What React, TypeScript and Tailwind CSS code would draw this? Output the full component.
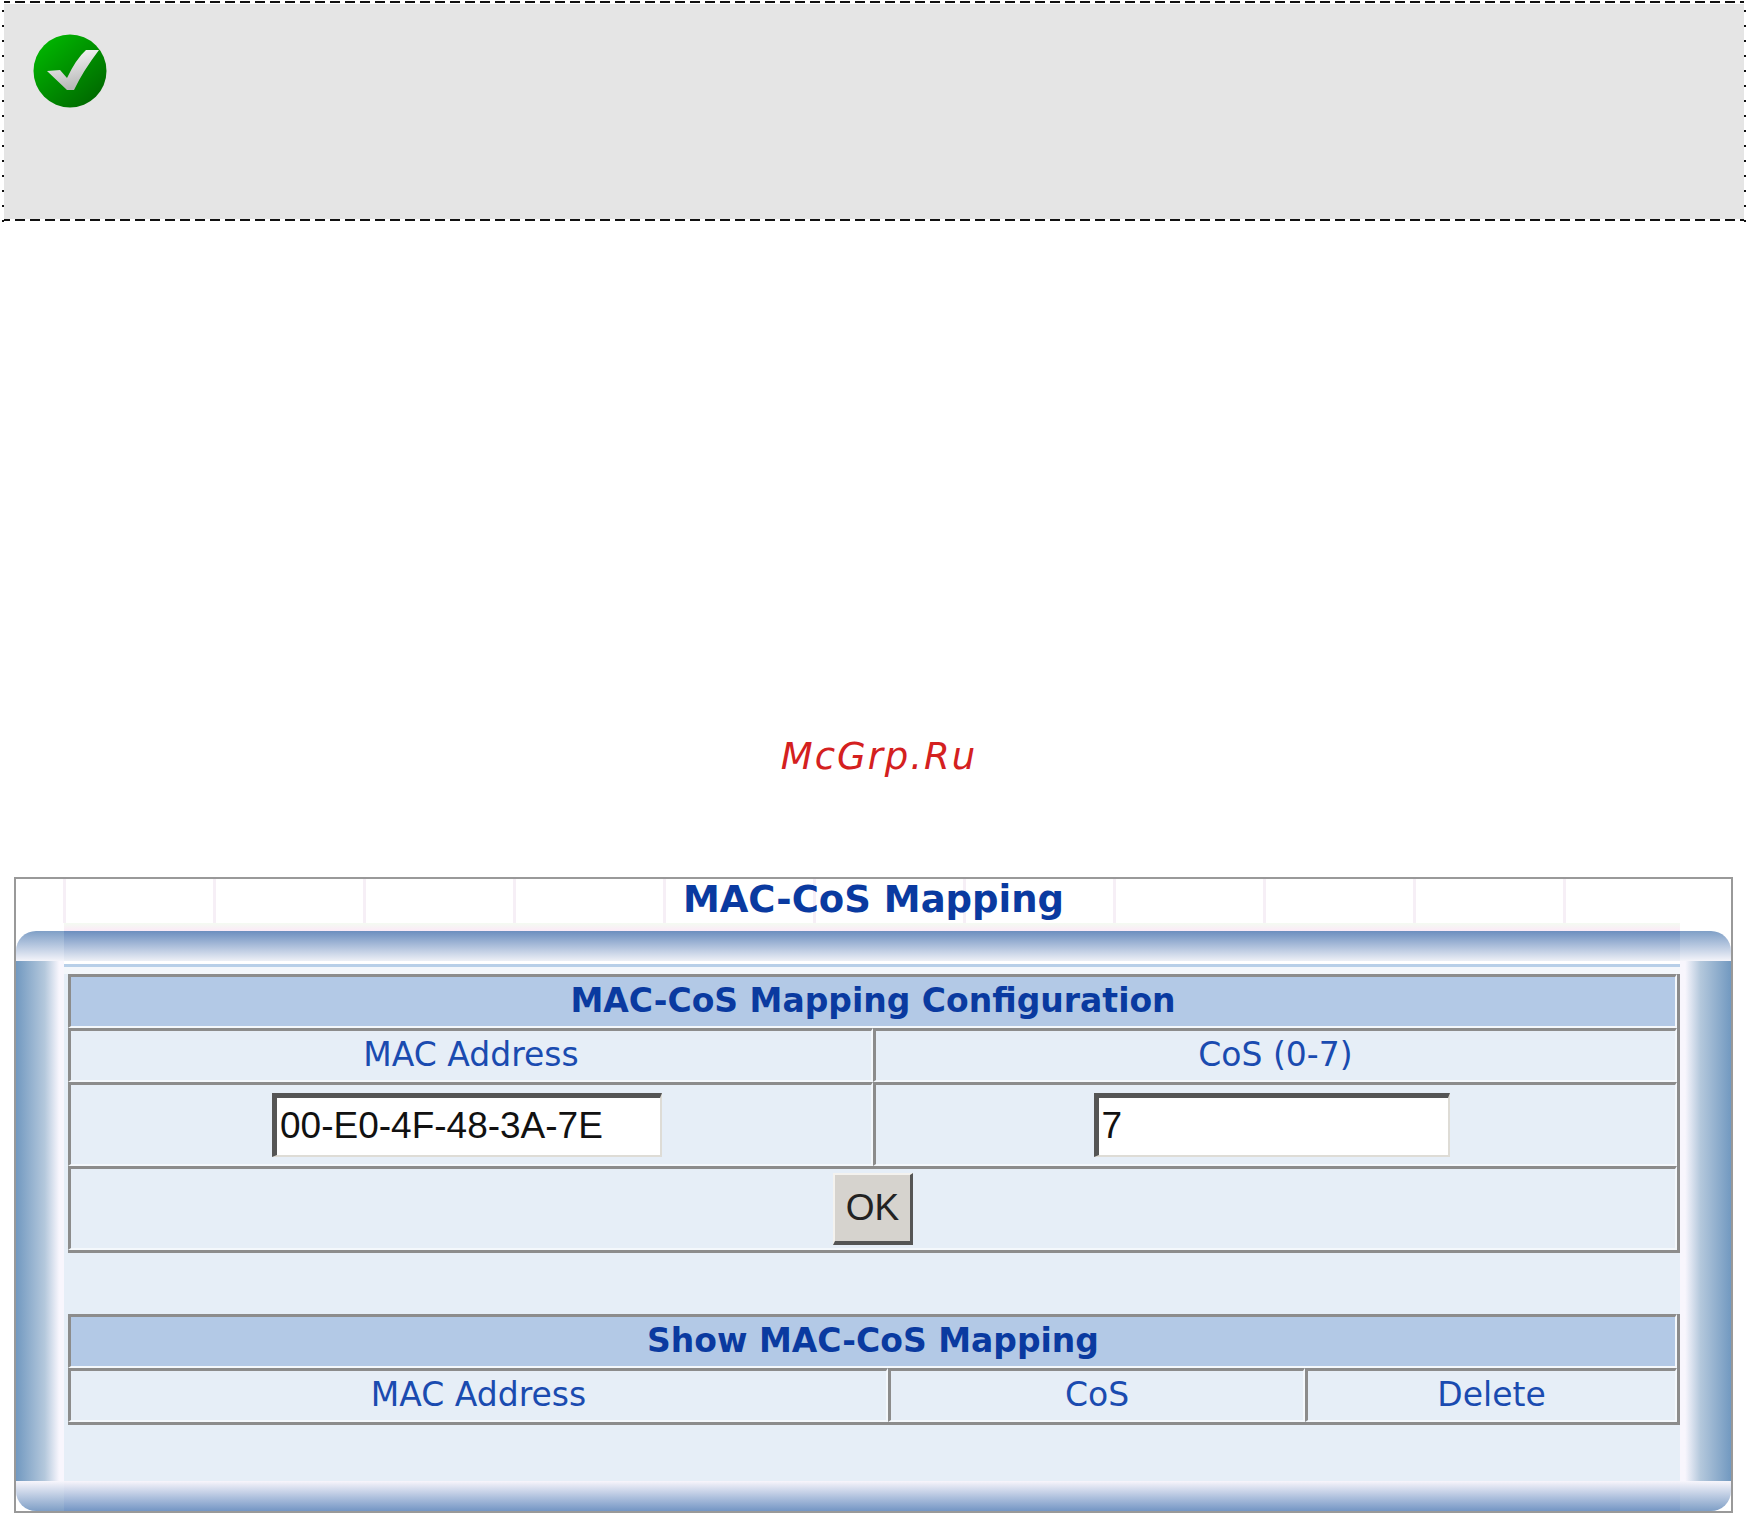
const CELL = 'flex items-center justify-center border-t-[3px] border-l-[3px] border-t-[#8c8c8c] border-l-[#8c8c8c] border-r-2 border-b-2 border-r-[#f4f8fc] border-b-[#f4f8fc]'

function HeadRow({ title }: { title: string }) {
  return (
    <div className={`${CELL} h-[54px] bg-[#b3c9e6] pb-[3px] text-[33px] leading-none font-bold text-[#0a3aa0]`}>
      {title}
    </div>
  )
}

function LabelCell({ label, className }: { label: string; className: string }) {
  return (
    <div className={`${CELL} ${className} h-[54px] pb-[3px] text-[33px] leading-none text-[#1a4bb0]`}>
      {label}
    </div>
  )
}

function TextBox({ value, className }: { value: string; className: string }) {
  return (
    <input
      readOnly
      value={value}
      className={`${className} h-[64px] border-t-[5px] border-l-[5px] border-b-2 border-r-2 border-t-[#555555] border-l-[#555555] border-b-[#dedcd6] border-r-[#dedcd6] bg-white pl-[3px] text-[37px] text-[#111111] font-['Liberation_Sans',sans-serif] outline-none`}
    />
  )
}

function CheckIcon() {
  return (
    <svg width="76" height="76" viewBox="0 0 76 76">
      <defs>
        <linearGradient id="disc" x1="0.15" y1="0.1" x2="0.85" y2="0.9">
          <stop offset="0" stopColor="#00b400" />
          <stop offset="1" stopColor="#006a00" />
        </linearGradient>
        <linearGradient id="tick" x1="0" y1="0" x2="0.3" y2="1">
          <stop offset="0" stopColor="#ffffff" />
          <stop offset="1" stopColor="#b8b8b8" />
        </linearGradient>
      </defs>
      <circle cx="38" cy="38" r="36.5" fill="url(#disc)" />
      <path d="M15 38 L28 37 L35 45 Q44 26 54 17 L67 17 Q51 38 42 57 L35 57 Z" fill="url(#tick)" />
    </svg>
  )
}

export default function App() {
  return (
    <div className="h-[1513px] w-full overflow-hidden bg-white font-['DejaVu_Sans',sans-serif]">
      {/* message box */}
      <div className="relative h-[222px] bg-[#e5e5e5]">
        <div className="absolute top-0 left-0 h-[4px] w-full bg-white bg-[repeating-linear-gradient(90deg,#111111_0,#111111_10px,transparent_10px,transparent_15px)] bg-[length:100%_2px] bg-[position:0_1px] bg-no-repeat" />
        <div className="absolute bottom-0 left-0 h-[3px] w-full bg-white bg-[repeating-linear-gradient(90deg,#111111_0,#111111_10px,transparent_10px,transparent_15px)] bg-[length:100%_2px] bg-no-repeat" />
        <div className="absolute top-0 left-0 h-full w-[4px] bg-white bg-[repeating-linear-gradient(0deg,#111111_0,#111111_2px,transparent_2px,transparent_15px)] bg-[length:2px_100%] bg-[position:2px_0] bg-no-repeat" />
        <div className="absolute top-0 right-0 h-full w-[3px] bg-white bg-[repeating-linear-gradient(0deg,#111111_0,#111111_2px,transparent_2px,transparent_15px)] bg-[length:2px_100%] bg-no-repeat" />
        <div className="pt-[33px] pl-[32px]">
          <CheckIcon />
        </div>
      </div>

      {/* watermark */}
      <div className="flex h-[655px] justify-center pt-[511px] pl-[11px]">
        <span className="text-[37px] leading-[48px] tracking-[2px] text-[#d42020] italic">McGrp.Ru</span>
      </div>

      {/* switch page */}
      <div className="ml-[14px] w-[1719px] border-2 border-[#999999] bg-white">
        <div className="flex h-[44px] justify-center bg-[repeating-linear-gradient(90deg,transparent_0,transparent_147px,#f6eff6_147px,#f6eff6_150px)] bg-[position:-100px_0] text-[37px] leading-[42px] font-bold text-[#0a3aa0]">
          MAC-CoS Mapping
        </div>

        <div className="flex h-[8px] px-[48px]">
          <div className="w-[1616px] bg-gradient-to-b from-[#f4fbf2] to-[#fbeaf7]" />
        </div>

        <div className="flex h-[30px]">
          <div className="w-[48px] rounded-tl-[20px] bg-gradient-to-b from-[#7f9fc6] to-[#f4f4fa]" />
          <div className="w-[1616px] bg-gradient-to-b from-[#6c8ebe] to-[#eef0f6]" />
          <div className="w-[51px] rounded-tr-[20px] bg-gradient-to-b from-[#7f9fc6] to-[#f4f4fa]" />
        </div>

        <div className="flex h-[520px]">
          <div className="w-[48px] bg-gradient-to-r from-[#7299c0] via-[#b4c8dc] via-60% to-[#f8f6fd] to-90%" />

          <div className="w-[1616px] bg-[#e6eef7]">
            <div className="h-[3px] bg-white" />
            <div className="h-[3px] bg-[#b8cfe8]" />
            <div className="h-[7px] bg-[#f4f7fb]" />

            <div className="ml-[4px] w-[1612px] border-r-[3px] border-b-[3px] border-[#8c8c8c]">
              <HeadRow title="MAC-CoS Mapping Configuration" />
              <div className="flex">
                <LabelCell label="MAC Address" className="w-[805px]" />
                <LabelCell label="CoS (0-7)" className="flex-1" />
              </div>
              <div className="flex">
                <div className={`${CELL} h-[84px] w-[805px] pr-[8px]`}>
                  <TextBox value="00-E0-4F-48-3A-7E" className="w-[390px]" />
                </div>
                <div className={`${CELL} h-[84px] flex-1 pr-[8px]`}>
                  <TextBox value="7" className="w-[356px]" />
                </div>
              </div>
              <div className={`${CELL} h-[84px]`}>
                <button className="h-[72px] w-[80px] border-t-2 border-l-2 border-r-[3px] border-b-[4px] border-t-[#f4f2ee] border-l-[#f4f2ee] border-r-[#555555] border-b-[#555555] bg-[#d6d3ce] text-[37px] leading-none text-[#222222] font-['Liberation_Sans',sans-serif]">
                  OK
                </button>
              </div>
            </div>

            <div className="mt-[61px] ml-[4px] w-[1612px] border-r-[3px] border-b-[3px] border-[#8c8c8c]">
              <HeadRow title="Show MAC-CoS Mapping" />
              <div className="flex">
                <LabelCell label="MAC Address" className="w-[820px]" />
                <LabelCell label="CoS" className="w-[417px]" />
                <LabelCell label="Delete" className="flex-1" />
              </div>
            </div>
          </div>

          <div className="w-[51px] bg-gradient-to-l from-[#7299c0] via-[#b4c8dc] via-60% to-[#f8f6fd] to-90%" />
        </div>

        <div className="flex h-[30px]">
          <div className="w-[48px] rounded-bl-[20px] bg-gradient-to-b from-[#f8f6fc] to-[#7f9fc6]" />
          <div className="w-[1616px] bg-gradient-to-b from-[#f8f5fb] to-[#7496c4]" />
          <div className="w-[51px] rounded-br-[20px] bg-gradient-to-b from-[#f8f6fc] to-[#7f9fc6]" />
        </div>
      </div>
    </div>
  )
}
